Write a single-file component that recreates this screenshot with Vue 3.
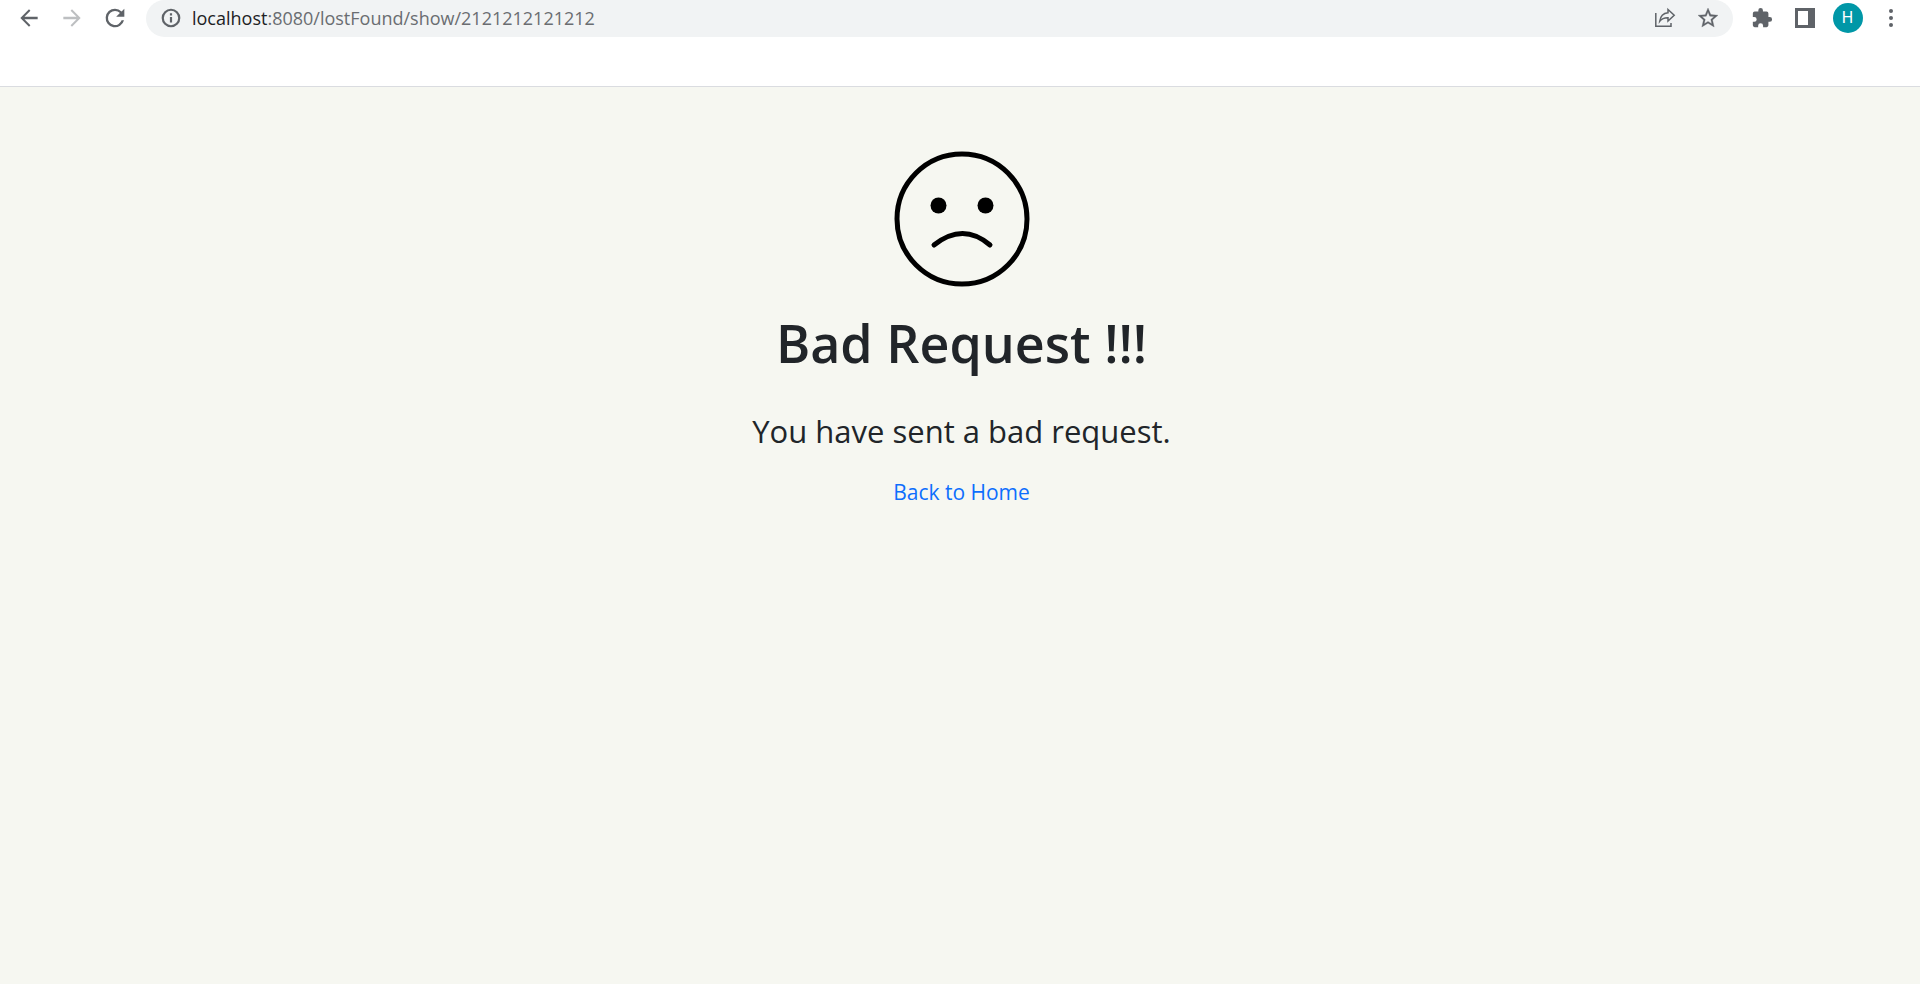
<script setup>
const url = { host: 'localhost', rest: ':8080/lostFound/show/2121212121212' }
</script>

<template>
  <div class="page">
    <header class="browser">
      <nav class="toolbar" aria-label="Browser toolbar">
        <button class="tool" type="button" aria-label="Back">
          <svg width="26" height="26" viewBox="0 0 24 24"><path d="M20 10.900H7.800l5.500-5.500L12 4l-8 8 8 8 1.300-1.400-5.500-5.500H20z" /></svg>
        </button>
        <button class="tool faded" type="button" aria-label="Forward" disabled>
          <svg width="26" height="26" viewBox="0 0 24 24"><path d="M4 10.900h12.200l-5.500-5.500L12 4l8 8-8 8-1.300-1.400 5.500-5.500H4z" /></svg>
        </button>
        <button class="tool" type="button" aria-label="Reload">
          <svg width="28" height="28" viewBox="0 0 24 24"><path d="M17.650 6.350A7.960 7.960 0 0 0 12 4a8 8 0 1 0 7.730 10h-2.080A6 6 0 1 1 12 6c1.660 0 3.140.690 4.220 1.780L13 11h7V4z" /></svg>
        </button>
        <div class="address">
          <svg class="info" width="22" height="22" viewBox="0 0 24 24"><path d="M10.800 6.800h2.400v2.400h-2.400zm0 4h2.400V17h-2.400zM12 1.800a10.200 10.200 0 1 0 0 20.400 10.200 10.200 0 0 0 0-20.400zm0 18a7.800 7.800 0 1 1 0-15.600 7.800 7.800 0 0 1 0 15.600z" /></svg>
          <div class="url"><span class="host">{{ url.host }}</span>{{ url.rest }}</div>
          <button class="tool" type="button" aria-label="Share this page">
            <svg width="22" height="22" viewBox="0 0 22 22" stroke="currentColor" stroke-width="1.500">
              <path class="line" d="M1.800 6v13.200H17V16" />
              <path class="line" d="M14 2.500l6.200 5.800L14 14v-3.300c-3.800-.1-6.300 1-8.300 3.600C6.300 9.500 9 6.200 14 5.700z" />
            </svg>
          </button>
          <button class="tool" type="button" aria-label="Bookmark this page">
            <svg width="24" height="24" viewBox="0 0 24 24" stroke="currentColor" stroke-width=".3"><path d="M22 9.240l-7.190-.620L12 2 9.190 8.630 2 9.240l5.460 4.730L5.820 21 12 17.270 18.180 21l-1.630-7.030zM12 15.400l-3.760 2.270 1-4.280-3.320-2.880 4.380-.380L12 6.100l1.710 4.040 4.380.380-3.320 2.880 1 4.280z" /></svg>
          </button>
        </div>
        <button class="tool" type="button" aria-label="Extensions">
          <svg width="22" height="22" viewBox="0 0 24 24"><path d="M20.500 11H19V7a2 2 0 0 0-2-2h-4V3.500a2.500 2.500 0 0 0-5 0V5H4a2 2 0 0 0-2 2v3.800h1.500a2.700 2.700 0 0 1 0 5.400H2V20a2 2 0 0 0 2 2h3.800v-1.500a2.700 2.700 0 0 1 5.400 0V22H17a2 2 0 0 0 2-2v-4h1.500a2.500 2.500 0 0 0 0-5z" /></svg>
        </button>
        <button class="tool" type="button" aria-label="Side panel">
          <svg width="20" height="20" viewBox="0 0 20 20"><path fill-rule="evenodd" d="M0 0h20v20H0zM3 3v14h10V3z" /></svg>
        </button>
        <button class="tool" type="button" aria-label="Profile">
          <span class="avatar">H</span>
        </button>
        <button class="tool" type="button" aria-label="Menu">
          <svg width="6" height="18" viewBox="0 0 6 18"><circle cx="3" cy="2" r="2" /><circle cx="3" cy="9" r="2" /><circle cx="3" cy="16" r="2" /></svg>
        </button>
      </nav>
    </header>

    <main class="content">
      <svg class="face" width="136" height="136" viewBox="0 0 136 136" role="img" aria-label="Sad face">
        <circle class="stroke" cx="68" cy="68" r="65" />
        <circle cx="44.500" cy="54.500" r="8" />
        <circle cx="91.500" cy="54.500" r="8" />
        <path class="stroke" d="M40 94Q69 71 96 94" />
      </svg>
      <h1>Bad Request !!!</h1>
      <p>You have sent a bad request.</p>
      <a href="#">Back to Home</a>
    </main>
  </div>
</template>

<style>
body {
  margin: 0;
  background: #f6f7f1;
}
</style>

<style scoped>
.page {
  min-height: 100vh;
  background: #f6f7f1;
  color: #212529;
  font-family: "Open Sans", "Noto Sans", sans-serif;
}
.browser {
  padding-bottom: 49px;
  background: #fff;
  border-bottom: 1px solid #dadce0;
}
.toolbar {
  display: flex;
  align-items: flex-start;
  padding: 0 8px 0 7px;
}
.tool {
  display: flex;
  flex: none;
  align-items: center;
  justify-content: center;
  width: 43px;
  height: 36px;
  padding: 0;
  border: 0;
  background: none;
  color: #5f6368;
  font: inherit;
}
.faded {
  color: #bdbfc1;
}
svg {
  display: block;
  flex: none;
  fill: currentColor;
}
.line {
  fill: none;
}
.address {
  display: flex;
  flex: 1;
  align-items: flex-start;
  height: 37px;
  margin: 0 7px 0 10px;
  padding: 0 4px 0 14px;
  border-radius: 19px;
  background: #f1f3f4;
}
.info {
  margin-top: 7px;
  color: #5f6368;
}
.url {
  flex: 1;
  margin-left: 10px;
  color: #6a6d71;
  font-size: 18px;
  line-height: 36px;
}
.host {
  color: #202124;
}
.avatar {
  width: 30px;
  height: 30px;
  border-radius: 50%;
  background: #0097a7;
  color: #fff;
  font-family: Roboto, sans-serif;
  font-size: 16px;
  line-height: 30px;
  text-align: center;
}
.content {
  display: flex;
  flex-direction: column;
  align-items: center;
  padding: 64px 13px 32px 16px;
}
.face {
  color: #000;
}
.stroke {
  fill: none;
  stroke: #000;
  stroke-width: 5;
  stroke-linecap: round;
}
h1 {
  margin: 24px 0 0;
  font-size: 52px;
  font-weight: 600;
  line-height: 64px;
}
p {
  margin: 32px 0 0;
  font-size: 31px;
  line-height: 48px;
}
a {
  margin-top: 21px;
  color: #0d6efd;
  font-size: 21px;
  line-height: 32px;
  text-decoration: none;
}
</style>
